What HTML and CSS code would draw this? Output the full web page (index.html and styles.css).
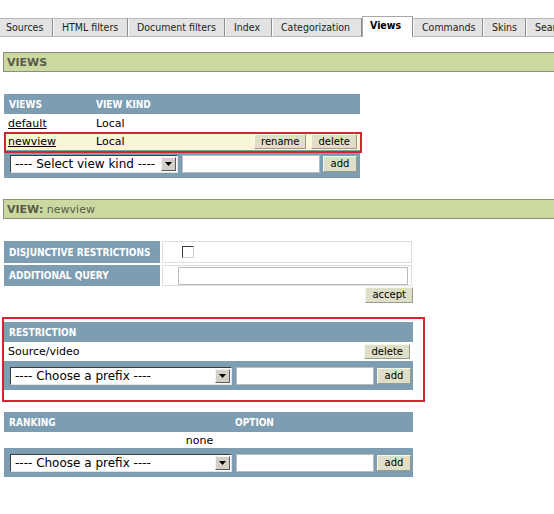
FILE: index.html
```html
<!DOCTYPE html>
<html lang="en">
<head>
<meta charset="utf-8">
<title>Views</title>
<link rel="stylesheet" href="styles.css">
</head>
<body>
<nav class="tabs">
  <a class="tab tab-sources">Sources</a>
  <a class="tab tab-html">HTML filters</a>
  <a class="tab tab-doc">Document filters</a>
  <a class="tab tab-index">Index</a>
  <a class="tab tab-cat">Categorization</a>
  <a class="tab tab-views active">Views</a>
  <a class="tab tab-cmd">Commands</a>
  <a class="tab tab-skins">Skins</a>
  <a class="tab tab-search">Search</a>
</nav>

<div class="bar"><b>VIEWS</b></div>

<div class="views-box">
  <table class="grid views">
    <colgroup><col class="col-name"><col class="col-kind"><col></colgroup>
    <tr class="head"><th>VIEWS</th><th colspan="2">VIEW KIND</th></tr>
    <tr><td><a href="#">default</a></td><td>Local</td><td class="acts"></td></tr>
    <tr class="current"><td><a href="#">newview</a></td><td>Local</td><td class="acts"><button class="btn">rename</button><button class="btn">delete</button></td></tr>
    <tr class="form"><td colspan="3"><div class="form-line">
      <span class="select w-kind"><select><option>---- Select view kind ----</option></select><span class="arrow"><svg width="7" height="4" viewBox="0 0 7 4"><path d="M0 0h7L3.5 4z"/></svg></span></span>
      <input class="text w-name" type="text">
      <button class="btn btn-add">add</button>
    </div></td></tr>
  </table>
  <div class="mark"></div>
</div>

<div class="bar bar-view"><b>VIEW:</b> newview</div>

<div class="opts">
  <div class="label">DISJUNCTIVE RESTRICTIONS</div>
  <div class="value"><input type="checkbox" class="check"></div>
  <div class="label">ADDITIONAL QUERY</div>
  <div class="value"><input type="text" class="text w-query"></div>
</div>
<div class="accept-line"><button class="btn">accept</button></div>

<div class="annot">
  <table class="grid restr">
    <colgroup><col><col class="col-act"></colgroup>
    <tr class="head"><th colspan="2">RESTRICTION</th></tr>
    <tr class="item"><td>Source/video</td><td class="acts"><button class="btn">delete</button></td></tr>
    <tr class="form form-tall"><td colspan="2"><div class="form-line">
      <span class="select w-prefix"><select><option>---- Choose a prefix ----</option></select><span class="arrow"><svg width="7" height="4" viewBox="0 0 7 4"><path d="M0 0h7L3.5 4z"/></svg></span></span>
      <input class="text w-name" type="text">
      <button class="btn btn-add">add</button>
    </div></td></tr>
  </table>
</div>

<table class="grid rank">
  <colgroup><col class="col-rank"><col></colgroup>
  <tr class="head"><th>RANKING</th><th>OPTION</th></tr>
  <tr class="none-row"><td colspan="2" class="none">none</td></tr>
  <tr class="form form-tall"><td colspan="2"><div class="form-line">
    <span class="select w-prefix"><select><option>---- Choose a prefix ----</option></select><span class="arrow"><svg width="7" height="4" viewBox="0 0 7 4"><path d="M0 0h7L3.5 4z"/></svg></span></span>
    <input class="text w-name" type="text">
    <button class="btn btn-add">add</button>
  </div></td></tr>
</table>
</body>
</html>
```

FILE: styles.css
```css
* { box-sizing: border-box; }
html, body { margin: 0; background: #fff; }
body {
  font-family: "DejaVu Sans", Verdana, sans-serif;
  font-size: 11px;
  color: #000;
  overflow: hidden;
}

/* tabs */
.tabs {
  display: flex;
  align-items: flex-end;
  height: 37px;
  margin-left: -3px;
  overflow: hidden;
}
.tab {
  flex: none;
  display: block;
  height: 19px;
  padding-left: 8px;
  line-height: 17px;
  background: #e3e3e3;
  border: 1px solid #b8b8b8;
  border-left-color: #fbfbfb;
  border-right-color: #8c8c8c;
  color: #222;
  font-family: "DejaVu Sans Condensed", "DejaVu Sans", sans-serif;
  font-stretch: condensed;
  font-size: 10.5px;
  white-space: nowrap;
  overflow: hidden;
}
.tab.active {
  height: 21px;
  padding-left: 7px;
  background: #fff;
  border-color: #a8a8a8;
  border-right-color: #8c8c8c;
  border-bottom: 0;
  font-weight: bold;
  color: #000;
}
.tab-sources { width: 56px; }
.tab-html { width: 75px; }
.tab-doc { width: 97px; }
.tab-index { width: 47px; }
.tab-cat { width: 90px; }
.tab-views { width: 51px; }
.tab-cmd { width: 70px; }
.tab-skins { width: 43px; }
.tab-search { width: 60px; }

/* section bars */
.bar {
  margin: 15px 0 0 3px;
  height: 20px;
  padding: 1px 0 0 3px;
  line-height: 18px;
  background: #cad9a0;
  border: 1px solid #8e8e7c;
  border-right: 0;
  color: #5a5a48;
  font-size: 11px;
}
.bar-view { margin-top: 21px; }

/* grids */
.grid {
  border-collapse: collapse;
  table-layout: fixed;
  background: #7d9db2;
}
.grid th {
  height: 20px;
  padding: 0 0 0 4px;
  text-align: left;
  color: #fff;
  font-family: "DejaVu Sans Condensed", "DejaVu Sans", sans-serif;
  font-stretch: condensed;
  font-size: 10px;
  font-weight: bold;
  white-space: nowrap;
}
.grid th:first-child { padding-left: 5px; }
.grid td {
  height: 18px;
  padding: 0 0 0 4px;
  background: #fff;
  white-space: nowrap;
}
.grid a { color: #000; }
.grid tr.current td { background: #f5f7d6; }
.grid tr.item td { height: 19px; }
.grid td.acts { text-align: right; padding: 0 3px 0 0; }
.grid tr.form td { height: 28px; padding: 0 0 0 6px; background: transparent; }
.grid tr.form-tall td { height: 29px; }

.views-box { position: relative; width: 356px; margin: 22px 0 0 4px; }
.views { width: 356px; }
.col-name { width: 88px; }
.col-kind { width: 100px; }
.col-act { width: 60px; }
.col-rank { width: 227px; }

.mark {
  position: absolute;
  left: 0;
  top: 38px;
  width: 358px;
  height: 21px;
  border: 2px solid #d22630;
  pointer-events: none;
}

/* controls */
.form-line { display: flex; align-items: center; gap: 4px; }
.btn {
  display: inline-block;
  height: 16px;
  margin: 0;
  padding: 0 6px;
  background: #dfdfc9;
  border: 1px solid;
  border-color: #f7f7ee #9b9b89 #9b9b89 #f7f7ee;
  font-family: "DejaVu Sans", sans-serif;
  font-size: 10px;
  line-height: 14px;
  color: #000;
  vertical-align: middle;
}
.acts .btn { height: 15px; margin-left: 5px; line-height: 13px; }
.btn-add { width: 34px; padding: 0; margin-left: -1px; }

.select { position: relative; flex: none; display: block; height: 18px; }
.select select {
  display: block;
  width: 100%;
  height: 100%;
  margin: 0;
  padding: 0 0 0 4px;
  -webkit-appearance: none;
  appearance: none;
  background: #fff;
  border: 1px solid;
  border-color: #3c3c3c #e4e4e4 #e4e4e4 #3c3c3c;
  border-radius: 0;
  font-family: "DejaVu Sans", sans-serif;
  font-size: 12px;
  color: #000;
}
.arrow {
  position: absolute;
  top: 2px;
  right: 2px;
  width: 15px;
  height: 14px;
  display: flex;
  align-items: center;
  justify-content: center;
  background: #d4d0c8;
  border: 1px solid;
  border-color: #f4f4f4 #5a5a5a #5a5a5a #f4f4f4;
  pointer-events: none;
}
.arrow svg { display: block; fill: #000; }
.w-kind { width: 168px; }
.w-prefix { width: 222px; }

.text {
  flex: none;
  height: 18px;
  margin: 0;
  padding: 0 2px;
  border: 1px solid #bcbcbc;
  background: #fff;
}
.w-name { width: 138px; }
.w-query { width: 230px; }

/* options */
.opts {
  display: grid;
  grid-template-columns: 156px 250px;
  grid-template-rows: 22px 21px;
  gap: 2px;
  width: 408px;
  margin: 22px 0 0 4px;
}
.label {
  display: flex;
  align-items: center;
  padding-left: 5px;
  background: #7d9db2;
  color: #fff;
  font-family: "DejaVu Sans Condensed", "DejaVu Sans", sans-serif;
  font-stretch: condensed;
  font-size: 10px;
  font-weight: bold;
  white-space: nowrap;
}
.value {
  display: flex;
  align-items: center;
  padding-left: 15px;
  border: 1px solid #dedede;
}
.check {
  -webkit-appearance: none;
  appearance: none;
  width: 12px;
  height: 12px;
  margin: 0 0 0 4px;
  border: 1px solid;
  border-color: #3a3a3a #d0d0d0 #d0d0d0 #3a3a3a;
  background: #fff;
}
.accept-line {
  display: flex;
  justify-content: flex-end;
  width: 409px;
  margin: 1px 0 0 4px;
}

/* restriction block */
.annot {
  width: fit-content;
  margin: 14px 0 0 2px;
  padding: 3px 10px 10px 0;
  border: 2px solid #d22630;
}
.restr, .rank { width: 409px; }
.rank { margin: 10px 0 0 4px; }
.grid tr.none-row td { height: 16px; }
.grid td.none { text-align: center; padding: 0 18px 0 0; }
```
